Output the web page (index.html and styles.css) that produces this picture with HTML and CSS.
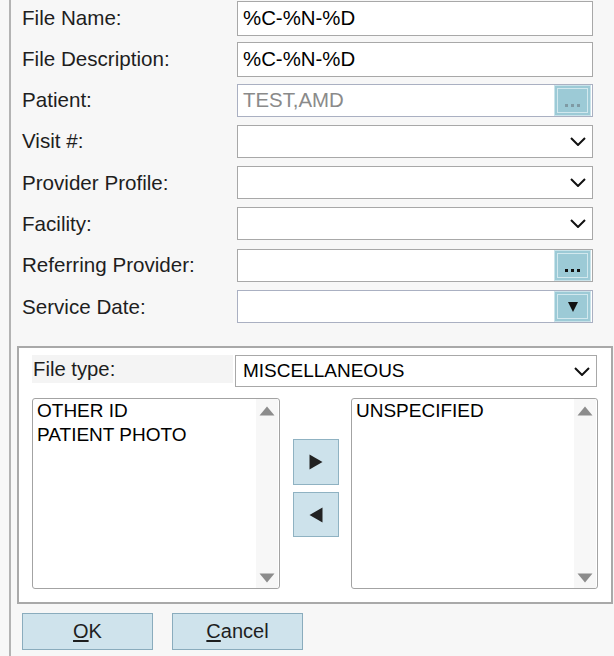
FILE: index.html
```html
<!DOCTYPE html>
<html>
<head>
<meta charset="utf-8">
<link rel="stylesheet" href="styles.css">
</head>
<body>
<div class="frame">
  <div class="form">
    <div class="row"><span class="lbl">File Name:</span><div class="field tall">%C-%N-%D</div></div>
    <div class="row"><span class="lbl">File Description:</span><div class="field tall">%C-%N-%D</div></div>
    <div class="row"><span class="lbl">Patient:</span>
      <div class="field blue"><span class="grow muted">TEST,AMD</span>
        <span class="dotbtn"><svg width="18" height="6" viewBox="0 0 18 6"><rect x="1" y="1" width="3" height="3" fill="#7f9aa4"/><rect x="7" y="1" width="3" height="3" fill="#7f9aa4"/><rect x="13" y="1" width="3" height="3" fill="#7f9aa4"/></svg></span>
      </div>
    </div>
    <div class="row"><span class="lbl">Visit #:</span><div class="field"><span class="grow"></span><svg class="chev" width="16" height="9" viewBox="0 0 16 9"><polyline points="1,1 8,8 15,1" fill="none" stroke="#111" stroke-width="2"/></svg></div></div>
    <div class="row"><span class="lbl">Provider Profile:</span><div class="field"><span class="grow"></span><svg class="chev" width="16" height="9" viewBox="0 0 16 9"><polyline points="1,1 8,8 15,1" fill="none" stroke="#111" stroke-width="2"/></svg></div></div>
    <div class="row"><span class="lbl">Facility:</span><div class="field"><span class="grow"></span><svg class="chev" width="16" height="9" viewBox="0 0 16 9"><polyline points="1,1 8,8 15,1" fill="none" stroke="#111" stroke-width="2"/></svg></div></div>
    <div class="row"><span class="lbl">Referring Provider:</span>
      <div class="field"><span class="grow"></span>
        <span class="dotbtn"><svg width="18" height="6" viewBox="0 0 18 6"><rect x="1" y="1" width="3" height="3" fill="#111"/><rect x="7" y="1" width="3" height="3" fill="#111"/><rect x="13" y="1" width="3" height="3" fill="#111"/></svg></span>
      </div>
    </div>
    <div class="row"><span class="lbl">Service Date:</span>
      <div class="field blue date"><span class="grow"></span>
        <span class="dotbtn center"><svg width="12" height="12" viewBox="0 0 12 12"><polygon points="1,1 11,1 6,11" fill="#111"/></svg></span>
      </div>
    </div>
  </div>

  <div class="group">
    <div class="type-row">
      <div class="type-lbl">File type:</div>
      <div class="field ft"><span class="grow">MISCELLANEOUS</span><svg class="chev" width="16" height="9" viewBox="0 0 16 9"><polyline points="1,1 8,8 15,1" fill="none" stroke="#111" stroke-width="2"/></svg></div>
    </div>
    <div class="lists">
      <div class="list left">
        <div class="items"><div>OTHER ID</div><div>PATIENT PHOTO</div></div>
        <div class="sbar">
          <svg width="16" height="10" viewBox="0 0 16 10"><polygon points="8,0.5 15.5,9.5 0.5,9.5" fill="#8c8c8c"/></svg>
          <svg width="16" height="10" viewBox="0 0 16 10"><polygon points="0.5,0.5 15.5,0.5 8,9.5" fill="#8c8c8c"/></svg>
        </div>
      </div>
      <div class="movers">
        <div class="mbtn"><svg width="14" height="16" viewBox="0 0 14 16"><polygon points="0.5,0.5 13.5,8 0.5,15.5" fill="#222"/></svg></div>
        <div class="mbtn second"><svg width="14" height="16" viewBox="0 0 14 16"><polygon points="13.5,0.5 0.5,8 13.5,15.5" fill="#222"/></svg></div>
      </div>
      <div class="list right">
        <div class="items"><div>UNSPECIFIED</div></div>
        <div class="sbar">
          <svg width="16" height="10" viewBox="0 0 16 10"><polygon points="8,0.5 15.5,9.5 0.5,9.5" fill="#8c8c8c"/></svg>
          <svg width="16" height="10" viewBox="0 0 16 10"><polygon points="0.5,0.5 15.5,0.5 8,9.5" fill="#8c8c8c"/></svg>
        </div>
      </div>
    </div>
  </div>

  <div class="actions">
    <div class="btn"><span class="ul">O</span>K</div>
    <div class="btn"><span class="ul">C</span>ancel</div>
  </div>
</div>
</body>
</html>
```
FILE: styles.css
```css
html, body {
  margin: 0;
  padding: 0;
  background: #f7f7f7;
  font-family: "Liberation Sans", Arial, sans-serif;
  color: #1e1e1e;
}
.frame {
  margin-left: 9px;
  border-left: 2px solid #b3b3b3;
  padding-left: 6px;
  height: 656px;
  box-sizing: border-box;
}
.form {
  padding-left: 5px;
}
.row {
  display: grid;
  grid-template-columns: 215px 356px;
  height: 41.3px;
  align-items: start;
}
.lbl {
  font-size: 20.6px;
  height: 33px;
  margin-top: 1px;
  display: flex;
  align-items: center;
}
.field {
  margin-top: 1px;
  height: 33px;
  box-sizing: border-box;
  border: 1px solid #a8a8a8;
  background: #fff;
  display: flex;
  align-items: center;
  font-size: 20.4px;
  color: #000;
  padding-left: 5px;
}
.field.tall {
  height: 35px;
}
.field.blue {
  border-color: #aab0c2;
}
.grow {
  flex: 1;
}
.muted {
  color: #8a8a8a;
}
.chev {
  margin-right: 6px;
}
.dotbtn {
  width: 37px;
  height: 31px;
  box-sizing: border-box;
  margin-right: 1px;
  background: #9ccad6;
  border: 1px solid #c9e3ea;
  box-shadow: inset 0 0 0 2px #9ccad6, inset 0 0 0 3px #d2e8ee;
  display: flex;
  align-items: flex-end;
  justify-content: center;
  padding-bottom: 6px;
}
.dotbtn.center {
  align-items: center;
  padding-bottom: 0;
}
.group {
  margin-top: 16px;
  margin-right: 1px;
  border: 2px solid #a9a9a9;
  background: #fff;
  padding: 7px 13px 13px 13px;
}
.type-row {
  display: flex;
  align-items: flex-start;
  height: 32px;
}
.type-lbl {
  width: 200px;
  height: 28px;
  background: #f4f4f4;
  font-size: 20.3px;
  padding-left: 1px;
  display: flex;
  align-items: center;
}
.field.ft {
  margin-top: 0;
  margin-left: 2px;
  margin-right: 1px;
  flex: 1;
  height: 32px;
  font-size: 19px;
  padding-left: 7px;
}
.lists {
  margin-top: 11px;
  display: flex;
  height: 191px;
}
.list {
  border: 1px solid #a3a3a3;
  border-radius: 3px;
  background: #fff;
  display: flex;
  box-sizing: border-box;
}
.list.left {
  width: 248px;
}
.list.right {
  width: 247px;
}
.items {
  flex: 1;
  padding-left: 4px;
  font-size: 19px;
  line-height: 24px;
  color: #000;
}
.sbar {
  width: 22px;
  margin-right: 1px;
  background: #f7f7f7;
  display: flex;
  flex-direction: column;
  justify-content: space-between;
  align-items: center;
  padding: 7px 0 5px;
}
.movers {
  width: 46px;
  margin: 0 12px 0 13px;
  padding-top: 41px;
}
.mbtn {
  width: 46px;
  height: 46px;
  box-sizing: border-box;
  background: #cde2eb;
  border: 1px solid #8fb2c2;
  display: flex;
  align-items: center;
  justify-content: center;
}
.mbtn.second {
  margin-top: 7px;
  height: 45px;
}
.actions {
  margin-top: 9px;
  padding-left: 5px;
  display: flex;
  gap: 19px;
}
.btn {
  width: 131px;
  height: 37px;
  box-sizing: border-box;
  background: #cfe3ec;
  border: 1px solid #8aacbd;
  display: flex;
  align-items: center;
  justify-content: center;
  font-size: 20px;
  color: #1e1e1e;
}
.ul {
  text-decoration: underline;
  text-underline-offset: 2px;
}
```
